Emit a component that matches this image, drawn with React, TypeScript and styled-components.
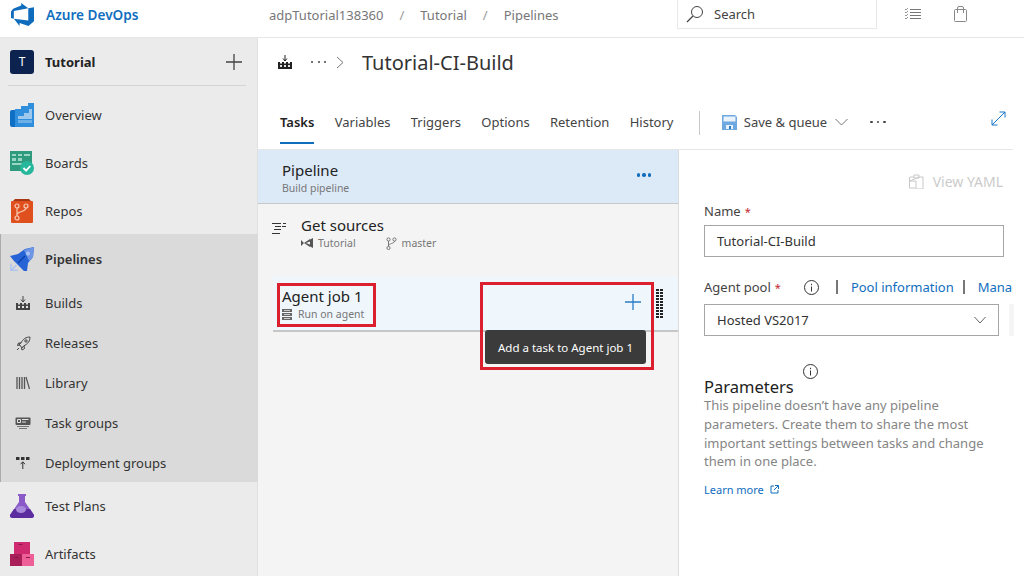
import React, { ReactNode } from "react";
import styled, { createGlobalStyle } from "styled-components";

const GlobalStyle = createGlobalStyle`
  html, body {
    margin: 0;
    padding: 0;
    background: #fff;
  }
  * {
    box-sizing: border-box;
  }
`;

const Page = styled.div`
  position: relative;
  width: 1024px;
  height: 576px;
  overflow: hidden;
  display: flex;
  flex-direction: column;
  background: #fff;
  color: #333;
  font-family: "Noto Sans", "Open Sans", sans-serif;
  font-size: 13px;
`;

/* top bar */
const TopBar = styled.header`
  flex: none;
  height: 38px;
  display: flex;
  border-bottom: 1px solid #e6e6e6;
`;
const Brand = styled.div`
  width: 258px;
  flex: none;
  display: flex;
  align-items: center;
  gap: 12px;
  padding: 0 0 9px 11px;
  color: #106ebe;
  font-size: 13.6px;
  font-weight: 600;
`;
const Crumbs = styled.nav`
  width: 419px;
  flex: none;
  display: flex;
  align-items: center;
  padding: 0 0 8px 11px;
  color: #777;
  font-size: 13px;
`;
const CrumbSep = styled.span`
  margin: 0 16px;
  color: #999;
`;
const SearchBox = styled.div`
  width: 200px;
  height: 29px;
  flex: none;
  display: flex;
  align-items: center;
  gap: 10px;
  padding-left: 8px;
  border: 1px solid #e8e8e8;
  border-top: 0;
  color: #444;
  font-size: 13px;
`;
const TopIcons = styled.div`
  display: flex;
  align-items: center;
  gap: 33px;
  height: 28px;
  padding-left: 28px;
`;

/* sidebar */
const Body = styled.div`
  flex: 1;
  min-height: 0;
  display: flex;
`;
const Sidebar = styled.aside`
  width: 258px;
  flex: none;
  background: #ebebeb;
  border-right: 1px solid #e0e0e0;
`;
const ProjectRow = styled.div`
  height: 48px;
  margin: 0 11px 5px 8px;
  padding: 0 4px 0 2px;
  display: flex;
  align-items: center;
  gap: 11px;
  border-bottom: 1px solid #d4d4d4;
  font-weight: 700;
  color: #222;
`;
const ProjectBadge = styled.span`
  width: 24px;
  height: 24px;
  border-radius: 3px;
  background: #0c2350;
  color: #fff;
  font-size: 12px;
  font-weight: 400;
  display: flex;
  align-items: center;
  justify-content: center;
`;
const ProjectName = styled.span`
  flex: 1;
`;
const NavItem = styled.div<{ $bold?: boolean }>`
  height: 48px;
  padding-left: 10px;
  display: flex;
  align-items: center;
  gap: 11px;
  color: #333;
  font-weight: ${(p) => (p.$bold ? 600 : 400)};
`;
const NavGroup = styled.div`
  height: 248px;
  margin: -1px -1px 0 0;
  background: #dadada;
  border-left: 1px solid #ababab;
`;
const GroupHead = styled(NavItem)`
  padding-left: 9px;
  height: 49px;
`;
const SubItem = styled.div`
  height: 40px;
  padding-left: 14px;
  display: flex;
  align-items: center;
  gap: 14px;
  color: #333;
`;
const SubIconSlot = styled.span`
  width: 16px;
  display: flex;
  justify-content: center;
`;

/* main column */
const Main = styled.main`
  flex: 1;
  min-width: 0;
  display: flex;
  flex-direction: column;
`;
const TitleRow = styled.div`
  height: 49px;
  flex: none;
  display: flex;
  align-items: center;
  padding: 0 0 1px 20px;
  color: #444;
`;
const TitleText = styled.h1`
  margin: 0 0 0 18px;
  font-size: 20px;
  font-weight: 400;
  color: #333;
`;
const Dots = styled.span<{ $gap: number }>`
  display: flex;
  align-items: center;
  gap: ${(p) => p.$gap}px;
`;
const TitleDots = styled(Dots)`
  margin: 0 10px 0 19px;
`;
const Dot = styled.i<{ $color?: string; $size?: number }>`
  display: block;
  width: ${(p) => p.$size ?? 2}px;
  height: ${(p) => p.$size ?? 2}px;
  border-radius: 50%;
  background: ${(p) => p.$color ?? "#444"};
`;
const TabBar = styled.div`
  height: 63px;
  flex: none;
  margin-right: 11px;
  display: flex;
  align-items: flex-start;
  padding: 24px 0 0 22px;
  border-bottom: 1px solid #e6e6e6;
`;
const Tab = styled.div<{ $active?: boolean }>`
  height: 33px;
  margin-right: 20.3px;
  padding-top: 1px;
  white-space: nowrap;
  line-height: 20px;
  color: ${(p) => (p.$active ? "#222" : "#444")};
  font-weight: ${(p) => (p.$active ? 600 : 400)};
  border-bottom: 2px solid ${(p) => (p.$active ? "#106ebe" : "transparent")};
`;
const TabDivider = styled.span`
  width: 1px;
  height: 24px;
  margin: 0 22px 0 5px;
  background: #c8c8c8;
`;
const SaveButton = styled.div`
  display: flex;
  align-items: center;
  height: 20px;
  margin-top: 1px;
  gap: 7px;
  color: #444;
  white-space: nowrap;
`;
const SaveChevron = styled.span`
  display: flex;
  margin-left: 1px;
`;
const MoreDots = styled(Dots)`
  height: 20px;
  margin: 1px 0 0 22px;
`;
const Expand = styled.span`
  margin-left: auto;
  margin-right: 7px;
  display: flex;
`;
const Content = styled.div`
  flex: 1;
  min-height: 0;
  display: flex;
`;

/* left task list */
const TaskPanel = styled.section`
  width: 421px;
  flex: none;
  background: #f4f4f4;
  border-right: 1px solid #dcdcdc;
`;
const PipelineRow = styled.div`
  height: 54px;
  padding: 10px 27px 0 24px;
  display: flex;
  justify-content: space-between;
  background: #dce9f7;
  border-bottom: 1px solid #c8c8c8;
`;
const RowTitle = styled.div`
  font-size: 15px;
  line-height: 21px;
  color: #222;
`;
const RowSub = styled.div`
  display: flex;
  align-items: center;
  font-size: 10.5px;
  line-height: 14px;
  color: #777;
`;
const RowDots = styled(Dots)`
  height: 3.5px;
  margin-top: 13px;
`;
const SourceRow = styled.div`
  height: 72px;
  padding: 11px 0 0 14px;
  display: flex;
  gap: 15px;
`;
const SourceIcon = styled.span`
  padding-top: 7px;
`;
const SubIcon = styled.span<{ $gap: number; $left?: number }>`
  display: flex;
  margin-right: ${(p) => p.$gap}px;
  margin-left: ${(p) => p.$left ?? 0}px;
`;
const JobRow = styled.div`
  height: 56px;
  margin-left: 15px;
  padding: 10px 14px 0 9px;
  display: flex;
  justify-content: space-between;
  background: #eff6fc;
  border-bottom: 2px solid #c6c6c6;
`;
const JobActions = styled.div`
  display: flex;
  gap: 15px;
  height: 36px;
  padding-top: 3px;
`;
const JobPlus = styled.span`
  display: flex;
  margin-top: 5px;
  height: 16px;
`;

/* right form */
const FormPanel = styled.section`
  flex: 1;
  min-width: 0;
  overflow: hidden;
  padding: 0 0 0 25px;
`;
const ViewYaml = styled.div`
  height: 51px;
  padding: 12px 21px 0 0;
  display: flex;
  justify-content: flex-end;
  align-items: center;
  gap: 9px;
  color: #cbcbcb;
  font-size: 14px;
`;
const FieldLabel = styled.div`
  display: flex;
  align-items: center;
  height: 20px;
  white-space: nowrap;
  color: #444;
`;
const Required = styled.span`
  color: #c4262e;
  margin-left: 4px;
  font-size: 11px;
`;
const TextField = styled.div<{ $width: number }>`
  width: ${(p) => p.$width}px;
  height: 32px;
  margin-top: 4px;
  padding: 0 12px;
  display: flex;
  align-items: center;
  justify-content: space-between;
  border: 1px solid #a6a6a6;
  color: #333;
`;
const PoolField = styled.div`
  margin-top: 20px;
`;
const PoolLinks = styled(FieldLabel)`
  width: 309px;
  overflow: hidden;
`;
const InfoSlot = styled.span`
  display: flex;
  margin: 0 17px 0 23px;
`;
const LinkBar = styled.span`
  width: 2px;
  height: 14px;
  flex: none;
  margin-right: 13px;
  background: #777;
`;
const Link = styled.a`
  color: #106ebe;
  margin-right: 9px;
  text-decoration: none;
`;
const SelectRow = styled.div`
  display: flex;
  gap: 10px;
  margin-top: 3px;
`;
const ScrollStub = styled.div`
  width: 5px;
  height: 32px;
  margin-top: 4px;
  background: #f5f5f5;
`;
const ParamsHead = styled.div`
  margin-top: 28px;
  display: flex;
  align-items: flex-start;
`;
const ParamsTitle = styled.h2`
  margin: 12px 0 0 0;
  font-size: 16.5px;
  line-height: 21px;
  font-weight: 400;
  color: #222;
`;
const ParamsInfo = styled.span`
  display: flex;
  margin-left: 9px;
`;
const ParamsBody = styled.p`
  margin: -1px 0 0;
  width: 300px;
  font-size: 13px;
  line-height: 18.8px;
  color: #858585;
`;
const LearnMore = styled.a`
  margin-top: 11px;
  display: flex;
  align-items: center;
  gap: 6px;
  font-size: 11px;
  color: #106ebe;
  text-decoration: none;
`;

/* things lying over the list */
const Annotation = styled.div<{ $x: number; $y: number; $w: number; $h: number }>`
  position: absolute;
  left: ${(p) => p.$x}px;
  top: ${(p) => p.$y}px;
  width: ${(p) => p.$w}px;
  height: ${(p) => p.$h}px;
  border: 3px solid #dc1f2e;
  pointer-events: none;
`;
const Tooltip = styled.div`
  position: absolute;
  left: 485px;
  top: 330px;
  width: 161px;
  height: 34px;
  display: flex;
  align-items: center;
  justify-content: center;
  border-radius: 3px;
  background: #3b3b3b;
  color: #fff;
  font-size: 11.5px;
  white-space: nowrap;
`;

const Svg = ({ size = 16, h, children }: { size?: number; h?: number; children: ReactNode }) => (
  <svg width={size} height={h ?? size} viewBox={`0 0 ${size} ${h ?? size}`} style={{ display: "block", flex: "none" }}>
    {children}
  </svg>
);

const Logo = () => (
  <svg width="23" height="23" viewBox="0 0 24 24" style={{ display: "block" }}>
    <path
      fill="#0f6cbd"
      d="M0 8.877L2.247 5.91l8.405-3.416V.022l7.37 5.393L2.966 8.338v8.225L0 15.707zm24-4.45v14.651l-5.753 4.9-9.303-3.057v3.056l-5.978-7.416 15.057 1.798V5.415z"
    />
  </svg>
);

const OverviewIcon = () => (
  <Svg size={24}>
    <rect x="0" y="7" width="24" height="17" rx="2" fill="#0f6fc4" />
    <path d="M5 6h6V3h7V0h6v24H5z" fill="#2f8fdc" />
    <path d="M8 13h6v-3h5V6h3v10H8z" fill="#9cc8ee" />
    <rect x="8" y="17" width="14" height="3" fill="#6db0e8" />
  </Svg>
);
const BoardsIcon = () => (
  <Svg size={24}>
    <rect x="0" y="0" width="22" height="20" fill="#2e9b7f" />
    <path d="M2 3h4v2H2zM8 3h4v2H8zM14 3h6v2h-6zM2 7h4v3H2zM8 7h4v3H8zM2 12h10v2H2z" fill="#9ad6c4" />
    <circle cx="17" cy="17" r="7" fill="#27b79c" />
    <path d="M13.5 17l2.6 2.6 4.2-4.6" stroke="#fff" strokeWidth="1.8" fill="none" />
  </Svg>
);
const ReposIcon = () => (
  <Svg size={24}>
    <path d="M3 2l2-2h14l2 2z" fill="#a63712" />
    <rect x="1" y="2" width="22" height="22" rx="1" fill="#e0501f" />
    <g stroke="#f8c9b4" strokeWidth="1.2" fill="none">
      <circle cx="7" cy="7" r="2" />
      <circle cx="16" cy="7" r="2" />
      <circle cx="7" cy="19" r="2" />
      <path d="M7 9v8M16 9c0 4-9 3-9 7" />
    </g>
  </Svg>
);
const PipelinesIcon = () => (
  <Svg size={24}>
    <path d="M0 9l8-2 7-5 9-2-1 10-5 6-1 8-3 0-6-6-4-4z" fill="#2563d6" />
    <path d="M14 3l10-3-1 10-4 4z" fill="#6f96e6" />
    <circle cx="18" cy="6.500" r="2" fill="#a9c2f2" />
    <path d="M1 16.500v7h7M1.500 23l5-5" stroke="#a9c2f2" strokeWidth="1.400" fill="none" />
    <path d="M8 16l7-7" stroke="#0e3fa8" strokeWidth="1.300" />
  </Svg>
);
const BuildIcon = ({ color = "#444" }: { color?: string }) => (
  <Svg size={14}>
    <path d="M7 0v6M5 3.500l2 2.500 2-2.500" stroke={color} fill="none" />
    <path d="M0 7h2v1.500h2V7h2v1.500h2V7h2v1.500h2V7h2v7H0z" fill={color} />
    <path d="M2 10h2v2H2zM6 10h2v2H6zM10 10h2v2h-2z" fill="#e4e4e4" />
  </Svg>
);
const RocketIcon = () => (
  <Svg size={15}>
    <path
      d="M14 1c-4 0-7 2-9 6L3 8l3 4 1.500-2C12 8 14 5 14 1zM5 7L2.500 7 1.500 9.500 4 9M8 10l.5 2.500L6 14l-.5-2M3 12l-2 2"
      stroke="#444"
      fill="none"
    />
    <circle cx="10" cy="5" r="1.200" stroke="#444" fill="none" />
  </Svg>
);
const LibraryIcon = () => (
  <Svg size={14}>
    <path d="M1 1v12M3.500 1v12M6 1v12M8.500 1v12" stroke="#555" strokeWidth="1.300" />
    <path d="M10 1l3.500 12" stroke="#555" strokeWidth="1.200" />
  </Svg>
);
const TaskGroupIcon = () => (
  <Svg size={16} h={12}>
    <rect x="0.500" y="0.500" width="15" height="7.500" rx="1" fill="#555" />
    <path d="M2.500 2.500h3v3h-3zM7 2.500h6.500M7 5h4" stroke="#e4e4e4" fill="none" />
    <path d="M2 9.500h12M4 11.500h8" stroke="#777" />
  </Svg>
);
const DeployIcon = () => (
  <Svg size={14}>
    <path d="M0 1h3.500v3H0zM5 1h3.500v3H5zM10 1h3.500v3H10z" fill="#333" />
    <path d="M6.800 13V6M4.600 8.200l2.200-2.400 2.200 2.400" stroke="#333" fill="none" />
  </Svg>
);
const TestIcon = () => (
  <Svg size={24}>
    <path d="M8 0h8v2h-1v6l9 13q1 3-3 3H3q-4 0-3-3l9-13V2H8z" fill="#8a5bc8" />
    <path d="M0 21l4-6h16l4 6q0 3-3 3H3q-3 0-3-3z" fill="#5c2d9e" />
    <ellipse cx="11" cy="15.500" rx="5" ry="3.500" fill="#a889dc" />
  </Svg>
);
const ArtifactsIcon = () => (
  <Svg size={24}>
    <rect x="4" y="0" width="16" height="12" fill="#cf2a6f" />
    <rect x="0" y="12" width="12" height="12" fill="#a81e58" />
    <rect x="12" y="12" width="12" height="12" fill="#ee5e97" />
    <path d="M8.500 2.500h4M4 15.500h4M16 15.500h4" stroke="#8b1748" />
  </Svg>
);
const PlusIcon = ({ size, color }: { size: number; color: string }) => (
  <Svg size={size}>
    <path d={`M${size / 2} 0v${size}M0 ${size / 2}h${size}`} stroke={color} strokeWidth="1.300" />
  </Svg>
);
const SearchIcon = () => (
  <Svg size={18}>
    <circle cx="11" cy="7" r="5.500" stroke="#444" fill="none" />
    <path d="M7 11l-6 6" stroke="#444" strokeWidth="1.200" />
  </Svg>
);
const ChecklistIcon = () => (
  <Svg size={16} h={13}>
    <path d="M5 1.500h11M5 4.500h11M5 7.500h11M5 10.500h11" stroke="#777" />
    <path d="M0 1l1 1 2-2M0 4l1 1 2-2M0 7l1 1 2-2M0 10l1 1 2-2" stroke="#999" fill="none" />
  </Svg>
);
const BagIcon = () => (
  <Svg size={14} h={16}>
    <rect x="0.500" y="3.500" width="12" height="12" rx="1" stroke="#888" fill="none" />
    <path d="M3.500 7V2q0-1.500 1.500-1.500h3q1.500 0 1.500 1.500v5" stroke="#888" fill="none" />
  </Svg>
);
const SaveIcon = () => (
  <Svg size={15}>
    <path d="M0 0h13l2 2v13H0z" fill="#6da8e0" />
    <path d="M1.500 1.500h12v5h-12z" fill="#eaf3fb" />
    <path d="M4 10h7v4H4z" fill="#eaf3fb" />
    <path d="M7 11h2v3H7z" fill="#2b79c2" />
  </Svg>
);
const Chevron = ({ w = 13, color = "#777" }: { w?: number; color?: string }) => (
  <Svg size={w} h={8}>
    <path d={`M0.500 1l${w / 2 - 0.5} 6 ${w / 2 - 0.5}-6`} stroke={color} fill="none" />
  </Svg>
);
const ChevronRight = () => (
  <Svg size={8} h={13}>
    <path d="M1 1l6 5.500-6 5.500" stroke="#777" fill="none" />
  </Svg>
);
const ExpandIcon = () => (
  <Svg size={15}>
    <path d="M1 14L14 1M8.500 1H14v5.500M1 8.500V14h5.500" stroke="#1b74c4" fill="none" />
  </Svg>
);
const SourcesIcon = () => (
  <Svg size={14} h={13}>
    <path d="M0 1.500h9M11 1.500h3M3 4.500h6M10 4.500h4M2 7.500h7M0 11.500h8" stroke="#333" fill="none" strokeWidth="1.200" />
  </Svg>
);
const VsIcon = () => (
  <Svg size={12} h={10}>
    <path d="M0 2l3 3-3 3zM12 0v10l-3-1.500V1.500zM3 5l6-4v2.500L5 5l4 1.500V9z" fill="#555" />
  </Svg>
);
const BranchIcon = () => (
  <Svg size={11} h={13}>
    <g stroke="#777" fill="none">
      <circle cx="2.500" cy="2.500" r="1.600" />
      <circle cx="8.500" cy="2.500" r="1.600" />
      <circle cx="2.500" cy="11" r="1.600" />
      <path d="M2.500 4v5.500M8.500 4c0 3-6 2-6 5" />
    </g>
  </Svg>
);
const ServerIcon = () => (
  <Svg size={10} h={11}>
    <path d="M0 0h10v3H0zM0 4h10v3H0zM0 8h10v3H0z" fill="#666" />
    <path d="M2 1.500h6M2 5.500h6M2 9.500h6" stroke="#ccc" />
  </Svg>
);
const GripIcon = () => (
  <Svg size={8} h={29}>
    {Array.from({ length: 10 }, (_, i) => (
      <path key={i} d={`M0 ${i * 3}h3v2H0zM4 ${i * 3}h3v2H4z`} fill="#222" />
    ))}
  </Svg>
);
const InfoIcon = () => (
  <Svg size={15}>
    <circle cx="7.500" cy="7.500" r="7" stroke="#333" fill="none" />
    <path d="M7.500 6.500v5M7.500 3.800v1.400" stroke="#333" fill="none" />
  </Svg>
);
const YamlIcon = () => (
  <Svg size={15}>
    <path d="M1 3h4M10 3h4v12H7V7H1zM0.500 3v11h6M5 1h5v3H5z" stroke="#c8c8c8" fill="none" />
  </Svg>
);
const ExternalIcon = () => (
  <Svg size={9}>
    <path d="M4 1H1v7h7V5M5 0.500h3.500V4M8 1L4 5" stroke="#106ebe" fill="none" />
  </Svg>
);

const tabs = ["Variables", "Triggers", "Options", "Retention", "History"];
const subItems: [string, ReactNode][] = [
  ["Builds", <BuildIcon key="b" />],
  ["Releases", <RocketIcon key="r" />],
  ["Library", <LibraryIcon key="l" />],
  ["Task groups", <TaskGroupIcon key="t" />],
  ["Deployment groups", <DeployIcon key="d" />],
];

const App = () => {
  return (
    <Page>
      <GlobalStyle />
      <TopBar>
        <Brand>
          <Logo />
          <span>Azure DevOps</span>
        </Brand>
        <Crumbs>
          adpTutorial138360
          <CrumbSep>/</CrumbSep>
          Tutorial
          <CrumbSep>/</CrumbSep>
          Pipelines
        </Crumbs>
        <SearchBox>
          <SearchIcon />
          Search
        </SearchBox>
        <TopIcons>
          <ChecklistIcon />
          <BagIcon />
        </TopIcons>
      </TopBar>
      <Body>
        <Sidebar>
          <ProjectRow>
            <ProjectBadge>T</ProjectBadge>
            <ProjectName>Tutorial</ProjectName>
            <PlusIcon size={16} color="#444" />
          </ProjectRow>
          <NavItem>
            <OverviewIcon />
            Overview
          </NavItem>
          <NavItem>
            <BoardsIcon />
            Boards
          </NavItem>
          <NavItem>
            <ReposIcon />
            Repos
          </NavItem>
          <NavGroup>
            <GroupHead $bold>
              <PipelinesIcon />
              Pipelines
            </GroupHead>
            {subItems.map(([label, icon]) => (
              <SubItem key={label}>
                <SubIconSlot>{icon}</SubIconSlot>
                {label}
              </SubItem>
            ))}
          </NavGroup>
          <NavItem>
            <TestIcon />
            Test Plans
          </NavItem>
          <NavItem>
            <ArtifactsIcon />
            Artifacts
          </NavItem>
        </Sidebar>
        <Main>
          <TitleRow>
            <BuildIcon color="#222" />
            <TitleDots $gap={4.5}>
              <Dot />
              <Dot />
              <Dot />
            </TitleDots>
            <ChevronRight />
            <TitleText>Tutorial-CI-Build</TitleText>
          </TitleRow>
          <TabBar>
            <Tab $active>Tasks</Tab>
            {tabs.map((t) => (
              <Tab key={t}>{t}</Tab>
            ))}
            <TabDivider />
            <SaveButton>
              <SaveIcon />
              Save &amp; queue
              <SaveChevron>
                <Chevron />
              </SaveChevron>
            </SaveButton>
            <MoreDots $gap={4}>
              <Dot $size={2.5} />
              <Dot $size={2.5} />
              <Dot $size={2.5} />
            </MoreDots>
            <Expand>
              <ExpandIcon />
            </Expand>
          </TabBar>
          <Content>
            <TaskPanel>
              <PipelineRow>
                <div>
                  <RowTitle>Pipeline</RowTitle>
                  <RowSub>Build pipeline</RowSub>
                </div>
                <RowDots $gap={2}>
                  <Dot $color="#106ebe" $size={3.5} />
                  <Dot $color="#106ebe" $size={3.5} />
                  <Dot $color="#106ebe" $size={3.5} />
                </RowDots>
              </PipelineRow>
              <SourceRow>
                <SourceIcon>
                  <SourcesIcon />
                </SourceIcon>
                <div>
                  <RowTitle>Get sources</RowTitle>
                  <RowSub>
                    <SubIcon $gap={5}>
                      <VsIcon />
                    </SubIcon>
                    Tutorial
                    <SubIcon $gap={5} $left={30}>
                      <BranchIcon />
                    </SubIcon>
                    master
                  </RowSub>
                </div>
              </SourceRow>
              <JobRow>
                <div>
                  <RowTitle>Agent job 1</RowTitle>
                  <RowSub>
                    <SubIcon $gap={6}>
                      <ServerIcon />
                    </SubIcon>
                    Run on agent
                  </RowSub>
                </div>
                <JobActions>
                  <JobPlus>
                    <PlusIcon size={16} color="#2a7cc7" />
                  </JobPlus>
                  <GripIcon />
                </JobActions>
              </JobRow>
            </TaskPanel>
            <FormPanel>
              <ViewYaml>
                <YamlIcon />
                View YAML
              </ViewYaml>
              <FieldLabel>
                Name<Required>*</Required>
              </FieldLabel>
              <TextField $width={300}>Tutorial-CI-Build</TextField>
              <PoolField>
                <PoolLinks>
                  Agent pool<Required>*</Required>
                  <InfoSlot>
                    <InfoIcon />
                  </InfoSlot>
                  <LinkBar />
                  <Link>Pool information</Link>
                  <LinkBar />
                  <Link>Manage</Link>
                </PoolLinks>
                <SelectRow>
                  <TextField $width={295}>
                    Hosted VS2017
                    <Chevron w={12} color="#666" />
                  </TextField>
                  <ScrollStub />
                </SelectRow>
              </PoolField>
              <ParamsHead>
                <ParamsTitle>Parameters</ParamsTitle>
                <ParamsInfo>
                  <InfoIcon />
                </ParamsInfo>
              </ParamsHead>
              <ParamsBody>
                This pipeline doesn’t have any pipeline parameters. Create them to share the most important settings
                between tasks and change them in one place.
              </ParamsBody>
              <LearnMore>
                Learn more
                <ExternalIcon />
              </LearnMore>
            </FormPanel>
          </Content>
        </Main>
      </Body>
      <Annotation $x={277} $y={283} $w={99} $h={44} />
      <Annotation $x={480} $y={282} $w={174} $h={88} />
      <Tooltip>Add a task to Agent job 1</Tooltip>
    </Page>
  );
};

export default App;
